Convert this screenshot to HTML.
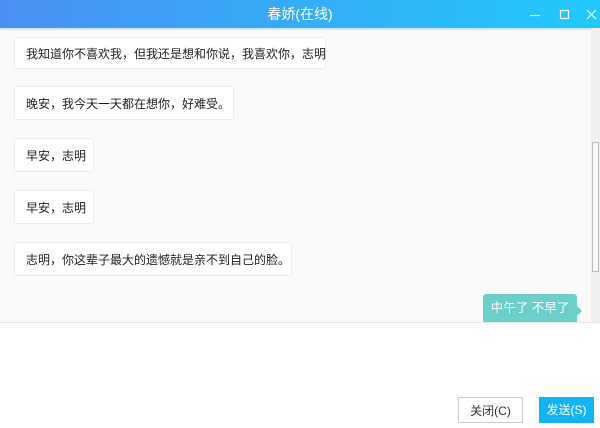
<!DOCTYPE html><html><head><meta charset="utf-8"><style>
body{margin:0;width:600px;height:428px;overflow:hidden;background:#fff;font-family:"Liberation Sans","Noto Sans CJK SC",sans-serif;position:relative}
.t{position:absolute;left:0;top:0;width:600px;height:28px;background:linear-gradient(90deg,#4a90f2,#21c9fc);color:#fff;font-size:14px;text-align:center;line-height:28px}
.chat{position:absolute;left:0;top:28px;width:600px;height:294px;background:#fafafa;border-top:2px solid #cfe6f7;box-sizing:border-box}
.b{position:absolute;left:14px;height:32px;background:#fff;border:1px solid #ececec;border-radius:3px;font-size:12px;color:#222;line-height:32px;padding:0 11px;box-sizing:border-box;white-space:nowrap}
.sb{position:absolute;left:591px;top:28px;width:9px;height:294px;background:#f0f0f0}
.th{position:absolute;left:592px;top:142px;width:7px;height:130px;background:#f8f8f8;border:1px solid #bbb;box-sizing:border-box}
.btn{position:absolute;top:397px;height:26px;font-size:12px;line-height:26px;text-align:center;box-sizing:border-box}
</style></head><body>
<div class="t">春娇(在线)
<svg style="position:absolute;left:520px;top:0" width="80" height="28"><g stroke="#fff" stroke-width="1.2" fill="none"><path d="M10 15.5h10"/><rect x="40.5" y="10.5" width="8" height="8"/><path d="M67 10l9 9M76 10l-9 9"/></g></svg></div>
<div class="chat"></div>
<div class="b" style="top:37px;width:312px">我知道你不喜欢我，但我还是想和你说，我喜欢你，志明</div>
<div class="b" style="top:86px;width:220px;height:34px;line-height:34px">晚安，我今天一天都在想你，好难受。</div>
<div class="b" style="top:138px;width:80px;height:34px;line-height:34px">早安，志明</div>
<div class="b" style="top:190px;width:80px;height:34px;line-height:34px">早安，志明</div>
<div class="b" style="top:242px;width:278px;height:34px;line-height:34px">志明，你这辈子最大的遗憾就是亲不到自己的脸。</div>
<div style="position:absolute;left:483px;top:294px;width:94px;height:28px;background:#6ccfca;border-radius:3px 3px 0 0;color:#fff;font-size:12.5px;line-height:28px;text-align:center">中午了 不早了</div>
<div style="position:absolute;left:577px;top:306px;border-left:5px solid #6ccfca;border-top:5px solid transparent;border-bottom:5px solid transparent"></div>
<div class="sb"></div><div class="th"></div>
<div style="position:absolute;left:0;top:322px;width:600px;height:1px;background:#e6e6e6"></div>
<div class="btn" style="left:458px;width:65px;border:1px solid #ccc;color:#333;background:#fff">关闭(C)</div>
<div class="btn" style="left:539px;width:55px;background:#14b4f4;color:#fff">发送(S)</div>
</body></html>
